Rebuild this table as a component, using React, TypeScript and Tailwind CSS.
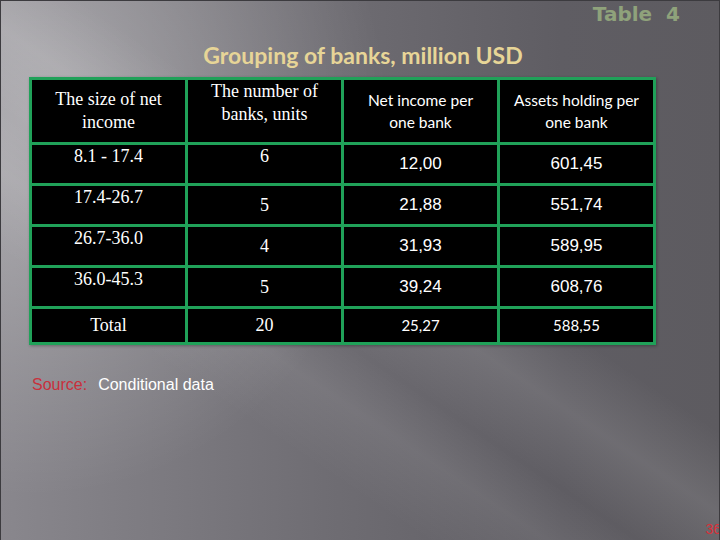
const serif = "font-['Liberation_Serif','Times_New_Roman',serif]";
const calibri = "font-['Lato','Open_Sans',sans-serif]";
const arial = "font-['Liberation_Sans',Arial,sans-serif]";

const rows = [
  { range: '8.1 - 17.4', count: '6', income: '12,00', assets: '601,45', top: true },
  { range: '17.4-26.7', count: '5', income: '21,88', assets: '551,74' },
  { range: '26.7-36.0', count: '4', income: '31,93', assets: '589,95' },
  { range: '36.0-45.3', count: '5', income: '39,24', assets: '608,76' },
];

export default function App() {
  return (
    <div className="relative flex h-[540px] w-[720px] flex-col overflow-hidden border-x border-t border-[#3c3b3f] bg-[linear-gradient(34deg,transparent_28%,rgba(255,255,255,0.07)_36%,transparent_42%,rgba(255,255,255,0.1)_50%,transparent_58%),radial-gradient(ellipse_50%_70%_at_4%_22%,rgba(255,255,255,0.32),transparent_100%),linear-gradient(to_right,#89878d_0%,#6f6d73_45%,#5f5d63_78%,#5d5b60_100%)]">
      <div className="flex justify-end pr-[39px] pt-[1px]">
        <span className="font-['DejaVu_Sans',Verdana,sans-serif] text-[20px] font-bold leading-[24px] whitespace-pre text-[#8fa27b]">
          Table  4
        </span>
      </div>

      <h1 className={`${calibri} mt-[16px] pl-[6px] text-center text-[23px] font-bold leading-[26px] text-[#e7d597]`}>
        Grouping of banks, million USD
      </h1>

      <div className="ml-[28px] mt-[9px] grid w-fit grid-cols-[153px_153px_153px_153px] grid-rows-[62px_38px_38px_38px_38px_33px] gap-[3px] bg-[#20a159] p-[3px] text-white shadow-[1px_1px_3px_rgba(0,0,0,0.3)]">
        <div className={`${serif} flex items-center justify-center bg-black text-center text-[18px] leading-[23px]`}>
          The size of net
          <br />
          income
        </div>
        <div className={`${serif} flex items-start justify-center bg-black text-center text-[18px] leading-[23px]`}>
          The number of
          <br />
          banks, units
        </div>
        <div className={`${calibri} flex items-center justify-center bg-black text-center text-[15.5px] leading-[22px]`}>
          Net income per
          <br />
          one bank
        </div>
        <div className={`${calibri} flex items-center justify-center bg-black text-center text-[15.5px] leading-[22px]`}>
          Assets holding per
          <br />
          one bank
        </div>

        {rows.map((r) => (
          <>
            <div key={r.range + 'a'} className={`${serif} flex items-start justify-center bg-black text-[18px] leading-[22px]`}>
              {r.range}
            </div>
            <div
              key={r.range + 'b'}
              className={`${serif} flex justify-center bg-black text-[18px] leading-[22px] ${r.top ? 'items-start' : 'items-center'}`}
            >
              {r.count}
            </div>
            <div key={r.range + 'c'} className={`${arial} flex items-center justify-center bg-black text-[17px]`}>
              {r.income}
            </div>
            <div key={r.range + 'd'} className={`${arial} flex items-center justify-center bg-black text-[17px]`}>
              {r.assets}
            </div>
          </>
        ))}

        <div className={`${serif} flex items-center justify-center bg-black text-[18px]`}>Total</div>
        <div className={`${serif} flex items-center justify-center bg-black text-[18px]`}>20</div>
        <div className={`${calibri} flex items-center justify-center bg-black text-[15px]`}>25,27</div>
        <div className={`${calibri} flex items-center justify-center bg-black text-[15px]`}>588,55</div>
      </div>

      <p className={`${arial} ml-[31px] mt-[30px] text-[16px] leading-[20px]`}>
        <span className="text-[#c9303c]">Source:</span>
        <span className="ml-[11px] text-white">Conditional data</span>
      </p>

      <div className="mt-auto flex justify-end pb-[2px]">
        <span className={`${arial} mr-[-2px] text-[14px] leading-[18px] text-[#d9303a]`}>36</span>
      </div>
    </div>
  );
}
